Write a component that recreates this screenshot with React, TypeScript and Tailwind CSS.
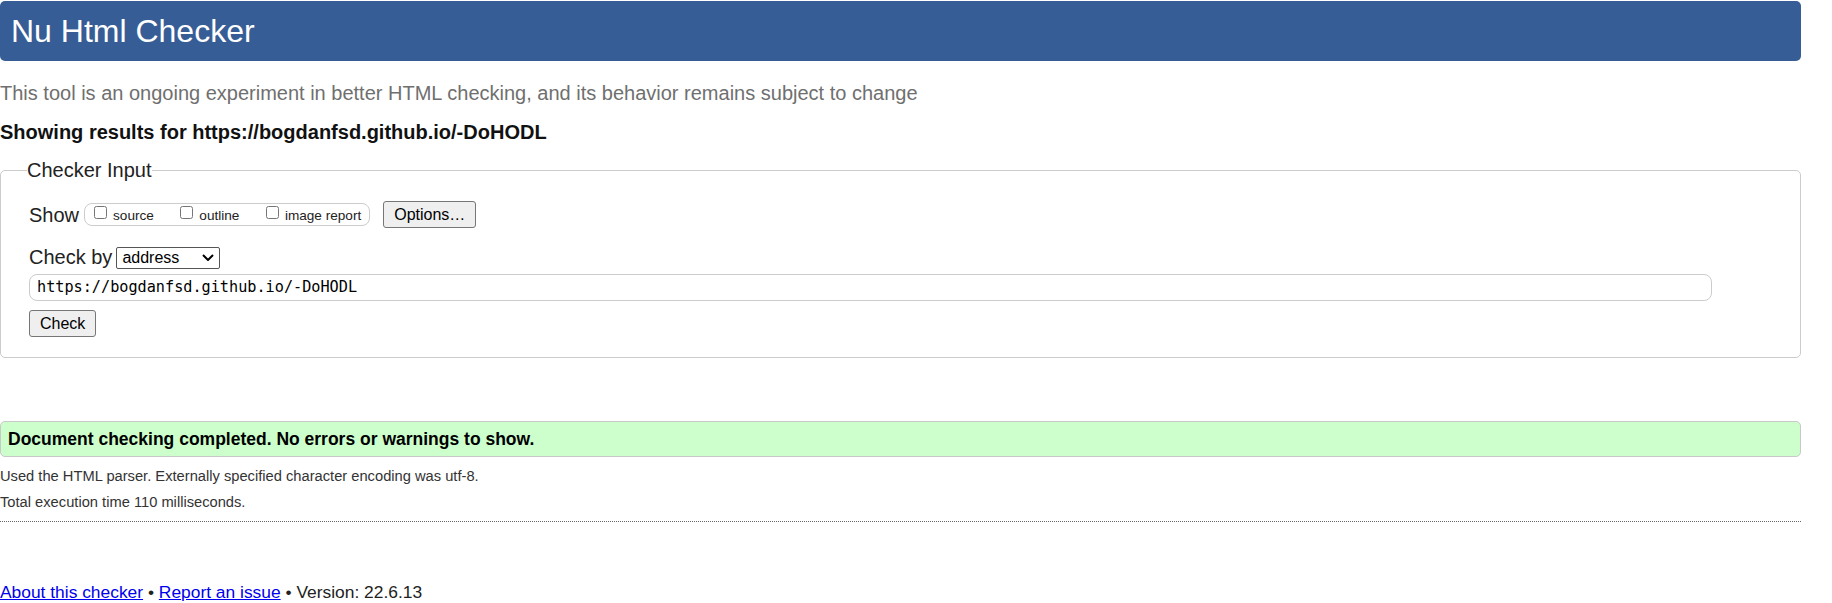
import React from "react";

function Checkbox({ label, last }: { label: string; last?: boolean }) {
  return (
    <label className={`flex items-start ${last ? "mr-[8px]" : "mr-[26.5px]"}`}>
      <input type="checkbox" className="m-0 mt-px h-[13px] w-[13px]" />
      <span className="ml-[6px] mt-[3px] text-[13.6px] leading-[16px] text-[#222]">{label}</span>
    </label>
  );
}

export default function App() {
  return (
    <div className="h-[603px] w-[1832px] overflow-hidden bg-white font-['Liberation_Sans',Arial,sans-serif] text-[#222]">
      <div className="w-[1801px]">
        <h1 className="mt-px h-[60px] rounded-[5px] bg-[#365d95] pl-[11px] text-[32px] font-normal leading-[60px] text-white">
          Nu Html Checker
        </h1>
        <p className="mt-[20px] text-[20px] leading-[24px] text-[#6f6f6f]">
          This tool is an ongoing experiment in better HTML checking, and its behavior remains subject to change
        </p>
        <p className="mt-[15px] text-[20px] font-bold leading-[24px] text-[#111]">
          Showing results for https://bogdanfsd.github.io/-DoHODL
        </p>

        <fieldset className="mt-[14px] rounded-[5px] border border-[#cccccc] pb-[20px] pl-[28px]">
          <legend className="-ml-[2px] p-0 text-[20px] leading-[24px] text-[#222]">Checker Input</legend>

          <div className="mt-[19px] flex h-[27px] items-center">
            <span className="text-[20px] leading-[24px]">Show</span>
            <div className="ml-[5px] flex h-[23px] items-start rounded-[8px] border border-[#cccccc] pl-[9px] pt-px">
              <Checkbox label="source" />
              <Checkbox label="outline" />
              <Checkbox label="image report" last />
            </div>
            <button className="ml-[13px] h-[27px] rounded-[3px] border border-[#767676] bg-[#efefef] px-[10px] text-[16px] leading-[20px] text-black">
              Options…
            </button>
          </div>

          <div className="mt-[18px] flex h-[22px] items-center">
            <span className="text-[20px] leading-[24px]">Check by</span>
            <div className="relative ml-[4px] h-[22px] w-[104px]">
              <select className="h-[22px] w-[104px] appearance-none rounded-[2px] border border-[#555] bg-white pl-[5px] text-[16px] leading-[20px] text-black">
                <option>address</option>
              </select>
              <svg className="pointer-events-none absolute left-[86px] top-[8px]" width="12" height="7" viewBox="0 0 12 7">
                <path d="M1 1l5 5 5-5" fill="none" stroke="#000" strokeWidth="2" />
              </svg>
            </div>
          </div>

          <div className="mt-[6px] flex h-[27px] w-[1683px] items-center rounded-[8px] border border-[#cccccc] pl-[7px] font-['DejaVu_Sans_Mono',monospace] text-[15.2px] text-black">
            https://bogdanfsd.github.io/-DoHODL
          </div>

          <button className="mt-[9px] h-[27px] rounded-[3px] border border-[#767676] bg-[#efefef] px-[10px] text-[16px] leading-[20px] text-black">
            Check
          </button>
        </fieldset>

        <div className="mt-[63px] flex h-[36px] items-center rounded-[5px] border border-[#c8c8c8] bg-[#ccffcc] pl-[7px] text-[17.5px] font-bold text-black">
          Document checking completed. No errors or warnings to show.
        </div>

        <p className="mt-[10px] text-[14.7px] leading-[18px] text-[#333]">
          Used the HTML parser. Externally specified character encoding was utf-8.
        </p>
        <p className="mt-[8px] text-[14.7px] leading-[18px] text-[#333]">Total execution time 110 milliseconds.</p>

        <div className="mt-[10px] border-t border-dotted border-[#666]" />

        <p className="mt-[60px] text-[17.4px] leading-[20px] text-[#222]">
          <a href="#" className="text-[#0000ee] underline">About this checker</a>
          {" • "}
          <a href="#" className="text-[#0000ee] underline">Report an issue</a>
          {" • Version: 22.6.13"}
        </p>
      </div>
    </div>
  );
}
